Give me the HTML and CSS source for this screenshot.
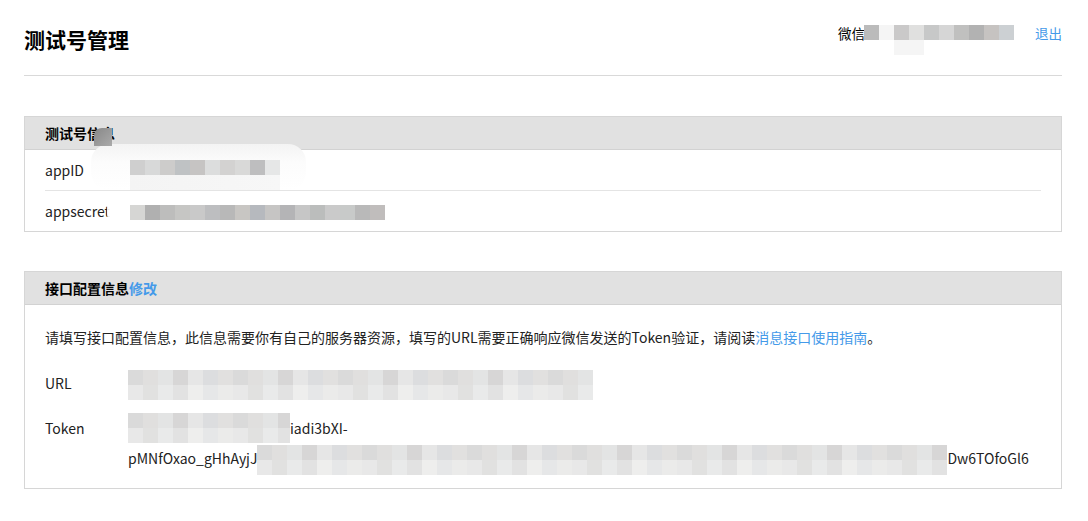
FILE: index.html
```html
<!DOCTYPE html>
<html lang="zh-CN">
<head>
    <meta charset="UTF-8">
    <meta name="viewport" content="width=device-width, initial-scale=1.0">
    <title>测试号管理</title>
    <link rel="stylesheet" href="styles.css">
</head>
<body>
    <div class="topbar">
        <h1 class="title">测试号管理</h1>
        <div class="account">
            <span>微信</span>
            <span class="mosaic mosaic-nick"></span>
            <a class="link logout" href="#">退出</a>
        </div>
    </div>

    <div class="panel">
        <div class="panel-hd">测试号信息</div>
        <div class="panel-bd">
            <div class="info-row">
                <span class="label">appID</span>
                <span class="mosaic mosaic-appid"></span>
            </div>
            <div class="info-row">
                <span class="label">appsecret</span>
                <span class="mosaic mosaic-secret"></span>
            </div>
        </div>
        <!-- redaction smudges over the screenshot -->
        <div class="smudge smudge-id"></div>
        <div class="smudge smudge-secret"></div>
        <div class="smudge-dark"></div>
    </div>

    <div class="panel">
        <div class="panel-hd">接口配置信息<a class="link" href="#">修改</a></div>
        <div class="panel-bd">
            <p class="tips">请填写接口配置信息，此信息需要你有自己的服务器资源，填写的URL需要正确响应微信发送的Token验证，请阅读<a class="link" href="#">消息接口使用指南</a>。</p>
            <div class="form-row">
                <span class="label">URL</span>
                <div class="value">
                    <span class="mosaic mosaic-url"></span>
                </div>
            </div>
            <div class="form-row">
                <span class="label">Token</span>
                <div class="value">
                    <div class="line"><span class="mosaic mosaic-token1"></span><span class="tail">iadi3bXI-</span></div>
                    <div class="line">pMNfOxao_gHhAyjJ<span class="mosaic mosaic-token2"></span>Dw6TOfoGl6</div>
                </div>
            </div>
        </div>
    </div>
</body>
</html>
```

FILE: styles.css
```css
body {
    font-family: "Noto Sans CJK SC", "Noto Sans", sans-serif;
    font-size: 14px;
    color: #222;
    margin: 0;
    padding: 0 26px 0 24px;
    background-color: #fff;
}
a {
    text-decoration: none;
}
.link {
    color: #459ae9;
}

/* top bar */
.topbar {
    display: flex;
    justify-content: space-between;
    align-items: flex-start;
    height: 75px;
    border-bottom: 1px solid #d9d9d9;
}
.title {
    margin: 24px 0 0;
    font-size: 21px;
    line-height: 30px;
    font-weight: bold;
    color: #000;
}
.account {
    display: flex;
    align-items: flex-start;
    margin-top: 23px;
    line-height: 20px;
    font-size: 13.5px;
    color: #000;
}
.logout {
    margin-left: 21px;
}

/* mosaic blocks (redacted values) */
.mosaic {
    position: relative;
    z-index: 1;
    display: inline-block;
    vertical-align: top;
    height: 30px;
    background-repeat: no-repeat;
    background-size: 100% 15px;
    background-position: left top, left bottom;
    background-image:
        repeating-linear-gradient(90deg, #dadada 0 15px, #e0dfde 15px 30px, #e3e4e4 30px 45px, #d7d6d6 45px 60px, #e6e6e6 60px 75px, #dcdddf 75px 90px, #e1e0df 90px 105px),
        repeating-linear-gradient(90deg, #e8e8e8 0 15px, #e1e1e0 15px 30px, #e9eaea 30px 45px, #e2e2e2 45px 60px, #eeeeed 60px 75px, #e6e7e8 75px 90px, #ebebea 90px 105px);
}
.mosaic-nick {
    width: 150px;
    margin-top: 2px;
    margin-left: -1px;
    background-image:
        linear-gradient(90deg, #bbbbbb 0 15px, #f5f5f5 15px 30px, #cac9c9 30px 45px, #e0e0df 45px 60px, #c7c8c8 60px 75px, #d6d6d6 75px 90px, #c0c0bf 90px 105px, #b2b2b2 105px 120px, #c6c3c1 120px 135px, #ccd0d3 135px 150px),
        linear-gradient(90deg, transparent 0 30px, #f5f5f5 30px 60px, transparent 60px);
}
.mosaic-appid {
    width: 150px;
    margin-top: 10px;
    background-image:
        linear-gradient(90deg, #cfcfcf 0 15px, #d8d9d9 15px 30px, #cdcccb 30px 45px, #bfc2c4 45px 60px, #c6c4c3 60px 75px, #dcdddd 75px 90px, #d3d2d1 90px 105px, #d9d9d8 105px 120px, #bebebf 120px 135px, #e6e7e7 135px 150px),
        linear-gradient(90deg, #f4f4f4, #f7f7f7);
}
.mosaic-secret {
    width: 255px;
    height: 15px;
    margin-top: 14px;
    background-size: 100% 15px;
    background-image:
        linear-gradient(90deg, #d6d6d4 0 15px, #b0b0b0 15px 30px, #bdbdbc 30px 45px, #c6c6c4 45px 60px, #c9c9c9 60px 75px, #bdbec0 75px 90px, #b8b8b8 90px 105px, #c8c6c3 105px 120px, #b6b9be 120px 135px, #c6c5c4 135px 150px, #b4b4b6 150px 165px, #c6c6c6 165px 180px, #bbbdbc 180px 195px, #cacaca 195px 210px, #c8cac9 210px 225px, #b9b9b9 225px 240px, #c0bdbc 240px 255px);
}
.mosaic-url {
    width: 465px;
    margin-top: 2px;
}
.mosaic-token1 {
    width: 162px;
}
.mosaic-token2 {
    width: 690px;
    margin-top: 2px;
}

/* panels */
.panel {
    position: relative;
    margin-top: 40px;
    border: 1px solid #d6d6d6;
}
.panel + .panel {
    margin-top: 39px;
}
.panel-hd {
    height: 32px;
    line-height: 32px;
    padding: 0 20px;
    background-color: #e1e1e1;
    border-bottom: 1px solid #d2d2d2;
    font-size: 14px;
    font-weight: bold;
    color: #000;
}
.panel-hd .link {
    font-weight: bold;
}
.panel-bd {
    padding: 0 20px;
}
.label {
    flex: 0 0 85px;
    color: #222;
}
.info-row {
    display: flex;
    height: 40px;
    line-height: 40px;
}
.info-row + .info-row {
    border-top: 1px solid #e4e4e4;
}
.tips {
    margin: 0;
    padding-top: 20px;
    line-height: 24px;
    font-size: 14px;
}
.form-row {
    display: flex;
    line-height: 30px;
    margin-top: 13px;
}
.tips + .form-row {
    margin-top: 19px;
}
.form-row:last-child {
    margin-bottom: 15px;
}
.value {
    flex: 1;
    min-width: 0;
    white-space: nowrap;
    margin-left: -2px;
}
.line {
    height: 30px;
}

/* redaction smudges laid over the screenshot */
.smudge {
    position: absolute;
    border-radius: 18px;
}
.smudge-id {
    left: 66px;
    top: 27px;
    width: 215px;
    height: 46px;
    background: linear-gradient(#f3f3f3, #fcfcfc 40%, rgba(255, 255, 255, 0.9) 100%);
}
.smudge-secret {
    left: 82px;
    top: 74px;
    width: 290px;
    height: 40px;
    background-color: rgba(255, 255, 255, 0.9);
}
.smudge-dark {
    position: absolute;
    left: 69px;
    top: 11px;
    width: 18px;
    height: 18px;
    border-radius: 8px 0 0 0;
    background: linear-gradient(135deg, #888, #aaa);
}
```
